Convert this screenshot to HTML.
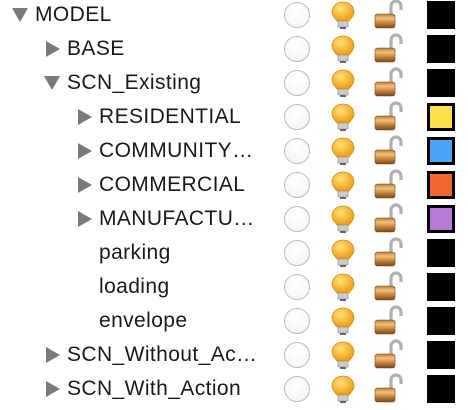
<!DOCTYPE html><html><head><style>
body{margin:0;width:468px;height:410px;background:#fff;overflow:hidden;font-family:"Liberation Sans",sans-serif;position:relative}
.r{position:absolute;left:0;width:468px;height:34px}
.t{position:absolute;top:5px;font-size:21px;letter-spacing:.4px;color:#1a1a1a;white-space:nowrap}
.tri{position:absolute;top:10px;width:0;height:0}
.down{border-left:8px solid transparent;border-right:8px solid transparent;border-top:14px solid #7a7a7a}
.right{border-top:8px solid transparent;border-bottom:8px solid transparent;border-left:14px solid #7a7a7a;top:9px}
.c{position:absolute;left:284px;top:4px;width:24px;height:24px;border-radius:50%;border:1.5px solid #bdbdbd;background:radial-gradient(circle at 50% 35%,#fff,#f3f3f3)}
.b{position:absolute;left:330px;top:2px}
.l{position:absolute;left:373px;top:1px}
.s{position:absolute;left:427px;top:3px;width:28px;height:28px;background:#000;box-sizing:border-box}
</style></head><body>
<svg width="0" height="0" style="position:absolute"><defs>
<radialGradient id="bg" cx="40%" cy="35%" r="60%"><stop offset="0" stop-color="#ffe27a"/><stop offset="1" stop-color="#f0a21a"/></radialGradient>
<linearGradient id="lg" x1="0" x2="0" y1="0" y2="1"><stop offset="0" stop-color="#b87a35"/><stop offset=".3" stop-color="#f2c27a"/><stop offset=".6" stop-color="#c98a45"/><stop offset="1" stop-color="#7a4518"/></linearGradient>
<g id="bulb"><path d="M13 2C6 2 2 7 2 12c0 4 3 6 5 9h12c2-3 5-5 5-9 0-5-4-10-11-10z" fill="url(#bg)" stroke="#d98a10" stroke-width=".8"/><rect x="8" y="21" width="10" height="6" fill="#ccc" stroke="#888" stroke-width=".6"/><rect x="10" y="27" width="6" height="2" fill="#666"/></g>
<g id="lock"><path d="M18 16V7a5 5 0 0 1 10 0v4" fill="none" stroke="#b0b0b0" stroke-width="3.2"/><rect x="2" y="15" width="20" height="14" rx="2.5" fill="url(#lg)" stroke="#7a4518" stroke-width=".6"/></g>
</defs></svg>
<div id="rows"></div>
<script>
var d=[["MODEL",0,"d","#000"],["BASE",1,"r","#000"],["SCN_Existing",1,"d","#000"],["RESIDENTIAL",2,"r","#fde04a"],["COMMUNITY…",2,"r","#4aa4f7"],["COMMERCIAL",2,"r","#f1672e"],["MANUFACTU…",2,"r","#b878d6"],["parking",2,"",""],["loading",2,"",""],["envelope",2,"",""],["SCN_Without_Ac…",1,"r","#000"],["SCN_With_Action",1,"r","#000"]];
var h="";d.forEach(function(x,i){var top=-2.5+34*i;var tl=12+32*x[1];var tx=35+32*x[1];
h+='<div class="r" style="top:'+top+'px">';
if(x[2]=="d")h+='<div class="tri down" style="left:'+tl+'px"></div>';
if(x[2]=="r")h+='<div class="tri right" style="left:'+(tl+2)+'px"></div>';
h+='<div class="t" style="left:'+tx+'px">'+x[0]+'</div><div class="c"></div><svg class="b" width="26" height="30"><use href="#bulb"/></svg><svg class="l" width="30" height="30"><use href="#lock"/></svg>';
h+='<div class="s" style="'+(x[3]&&x[3]!="#000"?'background:'+x[3]+';border:3px solid #000':'')+'"></div></div>';});
document.getElementById("rows").innerHTML=h;
</script>
</body></html>
